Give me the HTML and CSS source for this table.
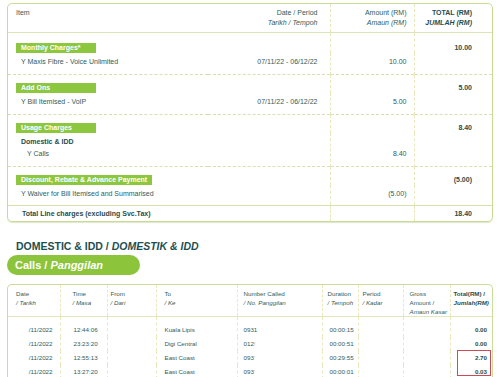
FILE: index.html
```html
<!DOCTYPE html>
<html>
<head>
<meta charset="utf-8">
<link rel="stylesheet" href="styles.css">
</head>
<body>
<div class="summary">
  <table class="sum">
    <colgroup><col class="c-item"><col class="c-date"><col class="c-amt"><col class="c-tot"></colgroup>
    <thead>
      <tr>
        <th class="item">Item</th>
        <th class="date">Date / Period<br><i>Tarikh / Tempoh</i></th>
        <th class="amt">Amount (RM)<br><i>Amaun (RM)</i></th>
        <th class="tot"><b>TOTAL (RM)</b><br><b><i>JUMLAH (RM)</i></b></th>
      </tr>
    </thead>
    <tbody>
      <tr class="ra first">
        <td class="item"><span class="label">Monthly Charges*</span></td><td></td><td class="amt"></td><td class="tot">10.00</td>
      </tr>
      <tr class="rb">
        <td class="item">Y Maxis Fibre - Voice Unlimited</td><td class="date">07/11/22 - 06/12/22</td><td class="amt">10.00</td><td class="tot"></td>
      </tr>
      <tr class="ra">
        <td class="item"><span class="label">Add Ons</span></td><td></td><td class="amt"></td><td class="tot">5.00</td>
      </tr>
      <tr class="rb">
        <td class="item">Y Bill Itemised - VoIP</td><td class="date">07/11/22 - 06/12/22</td><td class="amt">5.00</td><td class="tot"></td>
      </tr>
      <tr class="ra">
        <td class="item"><span class="label">Usage Charges</span></td><td></td><td class="amt"></td><td class="tot">8.40</td>
      </tr>
      <tr class="rb">
        <td class="item"><b class="sub">Domestic &amp; IDD</b><br><span class="indent">Y Calls</span></td><td class="date"></td><td class="amt">8.40</td><td class="tot"></td>
      </tr>
      <tr class="ra">
        <td class="item"><span class="label">Discount, Rebate &amp; Advance Payment</span></td><td></td><td class="amt"></td><td class="tot">(5.00)</td>
      </tr>
      <tr class="rb last">
        <td class="item">Y Waiver for Bill Itemised and Summarised</td><td class="date"></td><td class="amt">(5.00)</td><td class="tot"></td>
      </tr>
      <tr class="rt">
        <td class="item" colspan="2">Total Line charges (excluding Svc.Tax)</td><td class="amt"></td><td class="tot">18.40</td>
      </tr>
    </tbody>
  </table>
</div>

<h2 class="heading">DOMESTIC &amp; IDD / <i>DOMESTIK &amp; IDD</i></h2>
<div class="pill">Calls / <i>Panggilan</i></div>

<div class="calls">
  <table class="ct">
    <colgroup>
      <col class="w-date"><col class="w-time"><col class="w-from"><col class="w-to"><col class="w-num"><col class="w-dur"><col class="w-per"><col class="w-gross"><col class="w-tot">
    </colgroup>
    <thead>
      <tr>
        <th class="h-date">Date<br><i>/ Tarikh</i></th>
        <th class="h-time">Time<br><i>/ Masa</i></th>
        <th class="h-from">From<br><i>/ Dari</i></th>
        <th class="h-to">To<br><i>/ Ke</i></th>
        <th class="h-num">Number Called<br><i>/ No. Panggilan</i></th>
        <th class="h-dur">Duration<br><i>/ Tempoh</i></th>
        <th class="h-per">Period<br><i>/ Kadar</i></th>
        <th class="h-gross">Gross<br>Amount /<br><i>Amaun Kasar</i></th>
        <th class="h-tot"><b>Total(RM) /</b><br><b><i>Jumlah(RM)</i></b></th>
      </tr>
    </thead>
    <tbody>
      <tr class="r1">
        <td class="d-date">/11/2022</td><td class="d-time">12:44:06</td><td></td><td class="d-to">Kuala Lipis</td><td class="d-num">0931</td><td class="d-dur">00:00:15</td><td></td><td></td><td class="d-tot">0.00</td>
      </tr>
      <tr>
        <td class="d-date">/11/2022</td><td class="d-time">23:23:20</td><td></td><td class="d-to">Digi Central</td><td class="d-num">012<span class="cut">!</span></td><td class="d-dur">00:00:51</td><td></td><td></td><td class="d-tot">0.00</td>
      </tr>
      <tr>
        <td class="d-date">/11/2022</td><td class="d-time">12:55:13</td><td></td><td class="d-to">East Coast</td><td class="d-num">093<span class="cut">'</span></td><td class="d-dur">00:29:55</td><td></td><td></td><td class="d-tot">2.70</td>
      </tr>
      <tr>
        <td class="d-date">/11/2022</td><td class="d-time">13:27:20</td><td></td><td class="d-to">East Coast</td><td class="d-num">093<span class="cut">'</span></td><td class="d-dur">00:00:01</td><td></td><td></td><td class="d-tot">0.03</td>
      </tr>
    </tbody>
  </table>
  <div class="mark"></div>
</div>
</body>
</html>
```
FILE: styles.css
```css
html, body {
  margin: 0;
  padding: 0;
  background: #ffffff;
}
body {
  font-family: "Liberation Sans", Arial, sans-serif;
  color: #2f5c5c;
  width: 500px;
  height: 377px;
  overflow: hidden;
}

/* ---------- summary table ---------- */
.summary {
  margin: 3px 7px 0 7px;
  border: 1px solid #c9dc94;
  border-radius: 5px;
  box-shadow: 0 1px 1px #dfe6c8;
  overflow: hidden;
}
.sum {
  width: 100%;
  border-collapse: collapse;
  table-layout: fixed;
  font-size: 7px;
}
.c-item { width: 200px; }
.c-date { width: 122px; }
.c-amt { width: 84px; }
.c-tot { width: 78px; }

.sum th {
  font-weight: normal;
  line-height: 10px;
  padding: 4px 0 0 0;
  height: 24px;
  vertical-align: top;
  border-bottom: 1px solid #dbe6b6;
}
.sum th.item { text-align: left; padding-left: 8px; }
.sum th.date { text-align: right; padding-right: 12px; }
.sum th.amt { text-align: right; padding-right: 7px; }
.sum th.tot { text-align: right; padding-right: 20px; color: #1f4d4d; }
.sum th.tot b { font-weight: bold; }

.sum td.amt, .sum th.amt,
.sum td.tot, .sum th.tot {
  border-left: 1px dashed #e8e8bc;
}

.sum td { padding: 0; }
.sum .ra td {
  border-top: 1px dashed #d9dfb2;
  padding-top: 8px;
  line-height: 10px;
  vertical-align: top;
}
.sum .ra.first td { border-top: none; padding-top: 10px; }
.sum .ra td.tot {
  text-align: right;
  padding-right: 20px;
  font-weight: bold;
  color: #1f4d4d;
}
.label {
  display: inline-block;
  min-width: 70px;
  height: 10px;
  line-height: 10px;
  padding: 0 5px;
  margin-left: 8px;
  background: #8dc63f;
  color: #ffffff;
  font-weight: bold;
}
.sum .rb td {
  padding-top: 3px;
  padding-bottom: 6px;
  line-height: 12px;
  vertical-align: bottom;
}
.sum .rb.last td { padding-bottom: 5px; }
.sum .rb td.item { padding-left: 13px; vertical-align: top; }
.sum .rb td.date { text-align: right; padding-right: 12px; }
.sum .rb td.amt { text-align: right; padding-right: 7px; }
.sub { color: #1f4d4d; margin-left: 0; }
.indent { padding-left: 6px; }

.sum .rt td {
  border-top: 1px solid #d6e2a8;
  line-height: 11px;
  padding: 2px 0 2px 0;
  font-weight: bold;
  color: #1f4d4d;
}
.sum .rt td.item { padding-left: 14px; }
.sum .rt td.tot { text-align: right; padding-right: 20px; }

/* ---------- heading & pill ---------- */
.heading {
  margin: 17px 0 2px 16px;
  font-size: 10.5px;
  line-height: 14px;
  font-weight: bold;
  color: #1d4f4f;
}
.pill {
  width: 125px;
  height: 20px;
  line-height: 20px;
  margin-left: 7px;
  padding-left: 8px;
  border-radius: 10px;
  background: #8cc43c;
  color: #ffffff;
  font-size: 11px;
  font-weight: bold;
}

/* ---------- calls table ---------- */
.calls {
  position: relative;
  margin: 9px 7px 0 7px;
  border: 1px solid #cbdd98;
  border-bottom: none;
  border-radius: 5px 5px 0 0;
  height: 110px;
}
.ct {
  width: 100%;
  border-collapse: collapse;
  table-layout: fixed;
  font-size: 6.2px;
}
.w-date { width: 52px; }
.w-time { width: 47px; }
.w-from { width: 49px; }
.w-to { width: 81px; }
.w-num { width: 85px; }
.w-dur { width: 36px; }
.w-per { width: 45px; }
.w-gross { width: 47px; }
.w-tot { width: 42px; }

.ct th, .ct td {
  border-left: 1px dashed #ebe8bd;
  padding: 0;
  text-align: left;
  white-space: nowrap;
  overflow: hidden;
}
.ct th:first-child, .ct td:first-child { border-left: none; }
.ct th {
  font-weight: normal;
  line-height: 9px;
  padding-top: 4px;
  height: 27px;
  vertical-align: top;
  border-bottom: 1px solid #e1e8c0;
}
.h-date { padding-left: 8px !important; }
.h-time { padding-left: 12px !important; }
.h-from { padding-left: 3px !important; }
.h-to { padding-left: 8px !important; }
.h-num { padding-left: 6px !important; }
.h-dur { padding-left: 5px !important; }
.h-per { padding-left: 4px !important; }
.h-gross { padding-left: 6px !important; }
.h-tot { padding-left: 3px !important; color: #1f4d4d; }

.ct td {
  line-height: 14px;
}
.ct .r1 td { padding-top: 6px; }
.d-date { text-align: right !important; padding-right: 7px !important; }
.d-time { padding-left: 13px !important; }
.d-to { padding-left: 8px !important; }
.d-num { padding-left: 6px !important; }
.d-dur { padding-left: 7px !important; }
.d-tot {
  text-align: right !important;
  padding-right: 5px !important;
  font-weight: bold;
  color: #1f4d4d;
}
.cut { color: #9fb0b0; }

.mark {
  position: absolute;
  left: 449px;
  top: 65px;
  width: 34px;
  height: 26px;
  box-sizing: border-box;
  border: 1px solid #c94b57;
}
```
